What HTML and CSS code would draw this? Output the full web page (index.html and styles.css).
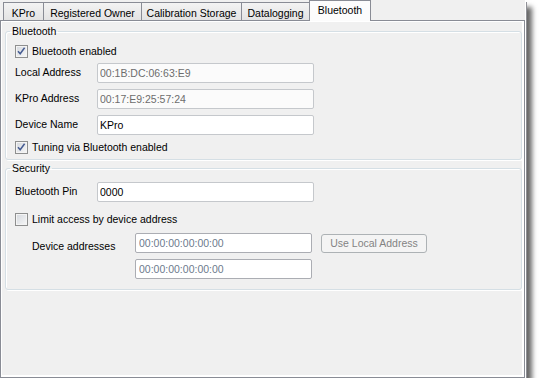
FILE: index.html
```html
<!DOCTYPE html>
<html lang="en">
<head>
    <meta charset="UTF-8">
    <meta name="viewport" content="width=device-width, initial-scale=1.0">
    <title>Bluetooth settings</title>
    <link rel="stylesheet" href="styles.css">
</head>
<body>
    <div class="window">
        <div class="tabs">
            <div class="tab tab-kpro">KPro</div>
            <div class="tab tab-owner">Registered Owner</div>
            <div class="tab tab-calib">Calibration Storage</div>
            <div class="tab tab-log">Datalogging</div>
            <div class="tab tab-bt active">Bluetooth</div>
        </div>
        <div class="page">
            <fieldset class="group group-bt">
                <legend>Bluetooth</legend>
                <div class="group-body">
                    <label class="check check-first">
                        <span class="box"><svg width="11" height="11" viewBox="0 0 11 11"><path d="M2 5.2 L4.2 7.8 L8.6 1.8" fill="none" stroke="#465c92" stroke-width="1.5"/></svg></span>
                        Bluetooth enabled
                    </label>
                    <div class="field field-first">
                        <span class="label">Local Address</span>
                        <input class="text readonly" type="text" value="00:1B:DC:06:63:E9" readonly>
                    </div>
                    <div class="field">
                        <span class="label">KPro Address</span>
                        <input class="text readonly" type="text" value="00:17:E9:25:57:24" readonly>
                    </div>
                    <div class="field">
                        <span class="label">Device Name</span>
                        <input class="text" type="text" value="KPro">
                    </div>
                    <label class="check">
                        <span class="box"><svg width="11" height="11" viewBox="0 0 11 11"><path d="M2 5.2 L4.2 7.8 L8.6 1.8" fill="none" stroke="#465c92" stroke-width="1.5"/></svg></span>
                        Tuning via Bluetooth enabled
                    </label>
                </div>
            </fieldset>
            <fieldset class="group group-sec">
                <legend>Security</legend>
                <div class="group-body">
                    <div class="field field-pin">
                        <span class="label">Bluetooth Pin</span>
                        <input class="text" type="text" value="0000">
                    </div>
                    <label class="check check-limit">
                        <span class="box"></span>
                        Limit access by device address
                    </label>
                    <div class="field field-addr">
                        <span class="label label-addr">Device addresses</span>
                        <input class="text addr" type="text" value="00:00:00:00:00:00" disabled>
                        <button class="btn" type="button" disabled>Use Local Address</button>
                    </div>
                    <div class="field field-addr2">
                        <input class="text addr" type="text" value="00:00:00:00:00:00" disabled>
                    </div>
                </div>
            </fieldset>
        </div>
    </div>
</body>
</html>
```

FILE: styles.css
```css
body {
    margin: 0;
    background: #fff;
    font-family: "Liberation Sans", Arial, sans-serif;
    font-size: 10.5px;
    color: #000;
}
.window {
    width: 525px;
    height: 378px;
    background: #f0f0f0;
    box-shadow: 1px 1px 0 #fff, 2px 2px 0 #8f9096, 7px 7px 5px rgba(0, 0, 0, 0.6);
    display: flex;
    flex-direction: column;
}

/* tab strip */
.tabs {
    display: flex;
    align-items: flex-start;
    height: 20px;
    padding-left: 3px;
}
.tab {
    box-sizing: border-box;
    height: 18px;
    margin-top: 2px;
    margin-left: -1px;
    padding-top: 3px;
    line-height: 14px;
    text-align: center;
    white-space: nowrap;
    border: 1px solid #898c95;
    border-bottom: none;
    background: linear-gradient(#f3f3f3, #e3e3e3);
}
.tab:first-child {
    margin-left: 0;
}
.tab-kpro { width: 41px; }
.tab-owner { width: 99px; }
.tab-calib { width: 101px; }
.tab-log { width: 69px; }
.tab-bt { width: 62px; }
.tab.active {
    height: 21px;
    margin-top: 0;
    padding-top: 2px;
    background: #fcfcfc;
    position: relative;
    z-index: 1;
}

/* tab page */
.page {
    flex: 1;
    box-sizing: border-box;
    border: 1px solid #898c95;
    box-shadow: inset 1px 1px 0 #fff, inset -2px -2px 0 #fff;
    padding: 4px 2px 0 4px;
}
.group {
    box-sizing: border-box;
    width: 517px;
    min-width: 0;
    margin: 0;
    padding: 0;
    border: 1px solid #d5dfe5;
    border-radius: 3px;
    box-shadow: inset 1px 1px 0 #fff, 1px 1px 0 #fff;
}
.group legend {
    margin-left: 4px;
    padding: 0 2px;
    line-height: 13px;
}
.group-sec {
    margin-top: 2px;
}
.group-body {
    padding: 0 0 5px 9px;
}
.group-sec .group-body {
    padding-bottom: 10px;
}

/* checkboxes */
.check {
    display: flex;
    align-items: center;
    gap: 4px;
    height: 13px;
    line-height: 13px;
    margin-top: 6px;
}
.check-first { margin-top: 7px; }
.check-limit { margin-top: 11px; }
.box {
    box-sizing: border-box;
    width: 13px;
    height: 13px;
    flex: none;
    border: 1px solid #8e8f8f;
    background: linear-gradient(135deg, #d4d8de, #f7f7f7);
    box-shadow: inset 0 0 0 1px #f4f4f4;
}
.box svg {
    display: block;
}

/* text fields */
.field {
    display: flex;
    align-items: center;
    height: 20px;
    margin-top: 6px;
}
.field-first { margin-top: 5px; }
.field-pin { margin-top: 7px; }
.field-addr { margin-top: 7px; }
.field .label {
    width: 82px;
    margin-top: -2px;
}
.field .label-addr {
    width: 103px;
    margin-left: 17px;
    margin-top: 5px;
}
.field-addr2 .addr {
    margin-left: 120px;
}
.text {
    box-sizing: border-box;
    width: 217px;
    height: 20px;
    margin: 0;
    padding: 0 2px;
    border: 1px solid #c5c8cc;
    border-radius: 2px;
    background: #fff;
    font: inherit;
    color: #000;
    outline: none;
}
.text.readonly {
    background: #fbfbfb;
    color: #6d6d6d;
}
.text.addr {
    width: 177px;
    padding-left: 3px;
    border-color: #abadb3;
    background: #fff;
    color: #6d7b8d;
}
.btn {
    box-sizing: border-box;
    width: 106px;
    height: 19px;
    margin-left: 9px;
    padding: 0;
    border: 1px solid #adb2b5;
    border-radius: 3px;
    background: #f4f4f4;
    font: inherit;
    color: #838383;
}
```
